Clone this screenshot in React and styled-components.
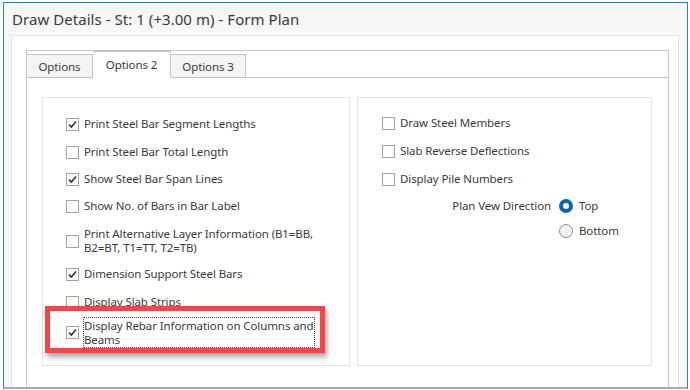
import React from "react";
import styled, { createGlobalStyle } from "styled-components";

const GlobalStyle = createGlobalStyle`
  html, body {
    margin: 0;
    padding: 0;
    background: #ffffff;
  }
  body {
    font-family: "Noto Sans", "Liberation Sans", sans-serif;
    color: #3a3a3a;
  }
`;

const Page = styled.div`
  width: 690px;
  height: 390px;
  overflow: hidden;
  box-sizing: border-box;
  padding: 2px 2px 0 3px;
  background: #ffffff;
`;

const Window = styled.div`
  height: 387px;
  box-sizing: border-box;
  border: 1px solid #2a7ad2;
  border-bottom: 2px solid #a9a9a9;
  background: #f7f7f7;
  display: flex;
  flex-direction: column;
`;

const TitleBar = styled.div`
  height: 32px;
  flex-shrink: 0;
  display: flex;
  align-items: center;
  padding-left: 8px;
  font-size: 15px;
  letter-spacing: 0.05px;
  color: #3a3a3a;
`;

const Panel = styled.div`
  flex: 1;
  display: flex;
  margin: 0 8px 0 7px;
  padding: 14px 10px 0 14px;
  background: #ffffff;
  border: 1px solid #e4e4e4;
  border-bottom: none;
`;

const TabControl = styled.div`
  flex: 1;
  display: flex;
  flex-direction: column;
  border: 1px solid #c4c4c4;
  border-bottom: none;
`;

const TabStrip = styled.div`
  height: 26px;
  display: flex;
  align-items: flex-end;
  border-bottom: 1px solid #c4c4c4;
`;

const Tab = styled.div`
  box-sizing: border-box;
  height: ${(p) => (p.$active ? "27px" : "23px")};
  margin-bottom: ${(p) => (p.$active ? "-1px" : "0")};
  width: ${(p) => p.$w}px;
  display: flex;
  align-items: center;
  justify-content: center;
  padding-bottom: ${(p) => (p.$active ? "2px" : "0")};
  font-size: 11.5px;
  letter-spacing: -0.1px;
  color: #3a3a3a;
  background: ${(p) => (p.$active ? "#ffffff" : "#f4f4f4")};
  border: 1px solid #c4c4c4;
  border-bottom: none;
  border-left: ${(p) => (p.$joined ? "none" : "1px solid #c4c4c4")};
`;

const TabPage = styled.div`
  flex: 1;
  display: flex;
  gap: 7px;
  padding: 19px 16px 0 15px;
  align-items: flex-start;
`;

const GroupBox = styled.div`
  box-sizing: border-box;
  width: ${(p) => p.$w}px;
  height: 269px;
  border: 1px solid #e2e2e2;
  padding: ${(p) => p.$pt}px 0 0 ${(p) => p.$pl}px;
  display: flex;
  flex-direction: column;
`;

const CheckRow = styled.div`
  display: flex;
  align-items: center;
  gap: 5px;
  margin-top: ${(p) => p.$mt || 0}px;
  font-size: 11.5px;
  letter-spacing: -0.1px;
  line-height: 14px;
  color: #3a3a3a;
`;

const Label = styled.span`
  white-space: nowrap;
  ${(p) =>
    p.$focused &&
    `
    width: 230px;
    margin-left: -1px;
    padding-top: 1px;
    border: 1px dotted #444;
  `}
`;

const Box = styled.span`
  flex-shrink: 0;
  width: 13px;
  height: 13px;
  display: flex;
  box-sizing: border-box;
  border: 1px solid #a2a2a2;
  background: #ffffff;
`;

const Highlight = styled.div`
  position: relative;
  z-index: 1;
  box-sizing: border-box;
  width: 280px;
  height: 47px;
  margin: -3px 0 0 -21px;
  padding: 6px 0 0 16px;
  border: 5px solid #f2464a;
  background: #ffffff;
  box-shadow: 2px 4px 5px rgba(0, 0, 0, 0.35);
`;

const RadioGrid = styled.div`
  display: grid;
  grid-template-columns: 177px auto;
  row-gap: 11px;
  margin-top: 13px;
  font-size: 11.5px;
  letter-spacing: -0.1px;
  line-height: 14px;
`;

const RadioCaption = styled.span`
  text-align: right;
  padding-right: 8px;
`;

const RadioItem = styled.div`
  grid-column: 2;
  display: flex;
  align-items: center;
  gap: 6px;
`;

const RadioDot = styled.span`
  width: 14px;
  height: 14px;
  box-sizing: border-box;
  border-radius: 50%;
  border: ${(p) => (p.$on ? "4px solid #0b63b5" : "1px solid #8c8c8c")};
  background: ${(p) => (p.$on ? "#ffffff" : "#f2f2f2")};
`;

const Check = ({ checked }) => (
  <Box>
    {checked && (
      <svg width="11" height="11" viewBox="0 0 11 11">
        <path
          d="M2 5.6 L4.4 8 L9 2.6"
          fill="none"
          stroke="#333"
          strokeWidth="1.6"
        />
      </svg>
    )}
  </Box>
);

const leftItems = [
  { lines: ["Print Steel Bar Segment Lengths"], checked: true, mt: 0 },
  { lines: ["Print Steel Bar Total Length"], checked: false, mt: 14 },
  { lines: ["Show Steel Bar Span Lines"], checked: true, mt: 13 },
  { lines: ["Show No. of Bars in Bar Label"], checked: false, mt: 13 },
  {
    lines: [
      "Print Alternative Layer Information (B1=BB,",
      "B2=BT, T1=TT, T2=TB)",
    ],
    checked: false,
    mt: 14,
  },
  { lines: ["Dimension Support Steel Bars"], checked: true, mt: 12 },
  { lines: ["Display Slab Strips"], checked: false, mt: 14 },
];

const rightItems = [
  { text: "Draw Steel Members", mt: 0 },
  { text: "Slab Reverse Deflections", mt: 14 },
  { text: "Display Pile Numbers", mt: 14 },
];

const Lines = ({ lines }) =>
  lines.map((l, i) => (
    <React.Fragment key={l}>
      {i > 0 && <br />}
      {l}
    </React.Fragment>
  ));

export default function App() {
  return (
    <Page>
      <GlobalStyle />
      <Window>
        <TitleBar>Draw Details - St: 1 (+3.00 m) - Form Plan</TitleBar>
        <Panel>
          <TabControl>
            <TabStrip>
              <Tab $w={66} $joined>
                Options
              </Tab>
              <Tab $w={78} $active $joined>
                Options 2
              </Tab>
              <Tab $w={75} $joined>
                Options 3
              </Tab>
            </TabStrip>
            <TabPage>
              <GroupBox $w={308} $pt={19} $pl={23}>
                {leftItems.map((it) => (
                  <CheckRow key={it.lines[0]} $mt={it.mt}>
                    <Check checked={it.checked} />
                    <Label>
                      <Lines lines={it.lines} />
                    </Label>
                  </CheckRow>
                ))}
                <Highlight>
                  <CheckRow>
                    <Check checked />
                    <Label $focused>
                      <Lines
                        lines={["Display Rebar Information on Columns and", "Beams"]}
                      />
                    </Label>
                  </CheckRow>
                </Highlight>
              </GroupBox>
              <GroupBox $w={295} $pt={18} $pl={24}>
                {rightItems.map((it) => (
                  <CheckRow key={it.text} $mt={it.mt}>
                    <Check />
                    <Label>{it.text}</Label>
                  </CheckRow>
                ))}
                <RadioGrid>
                  <RadioCaption>Plan Vew Direction</RadioCaption>
                  <RadioItem>
                    <RadioDot $on />
                    Top
                  </RadioItem>
                  <RadioItem>
                    <RadioDot />
                    Bottom
                  </RadioItem>
                </RadioGrid>
              </GroupBox>
            </TabPage>
          </TabControl>
        </Panel>
      </Window>
    </Page>
  );
}
